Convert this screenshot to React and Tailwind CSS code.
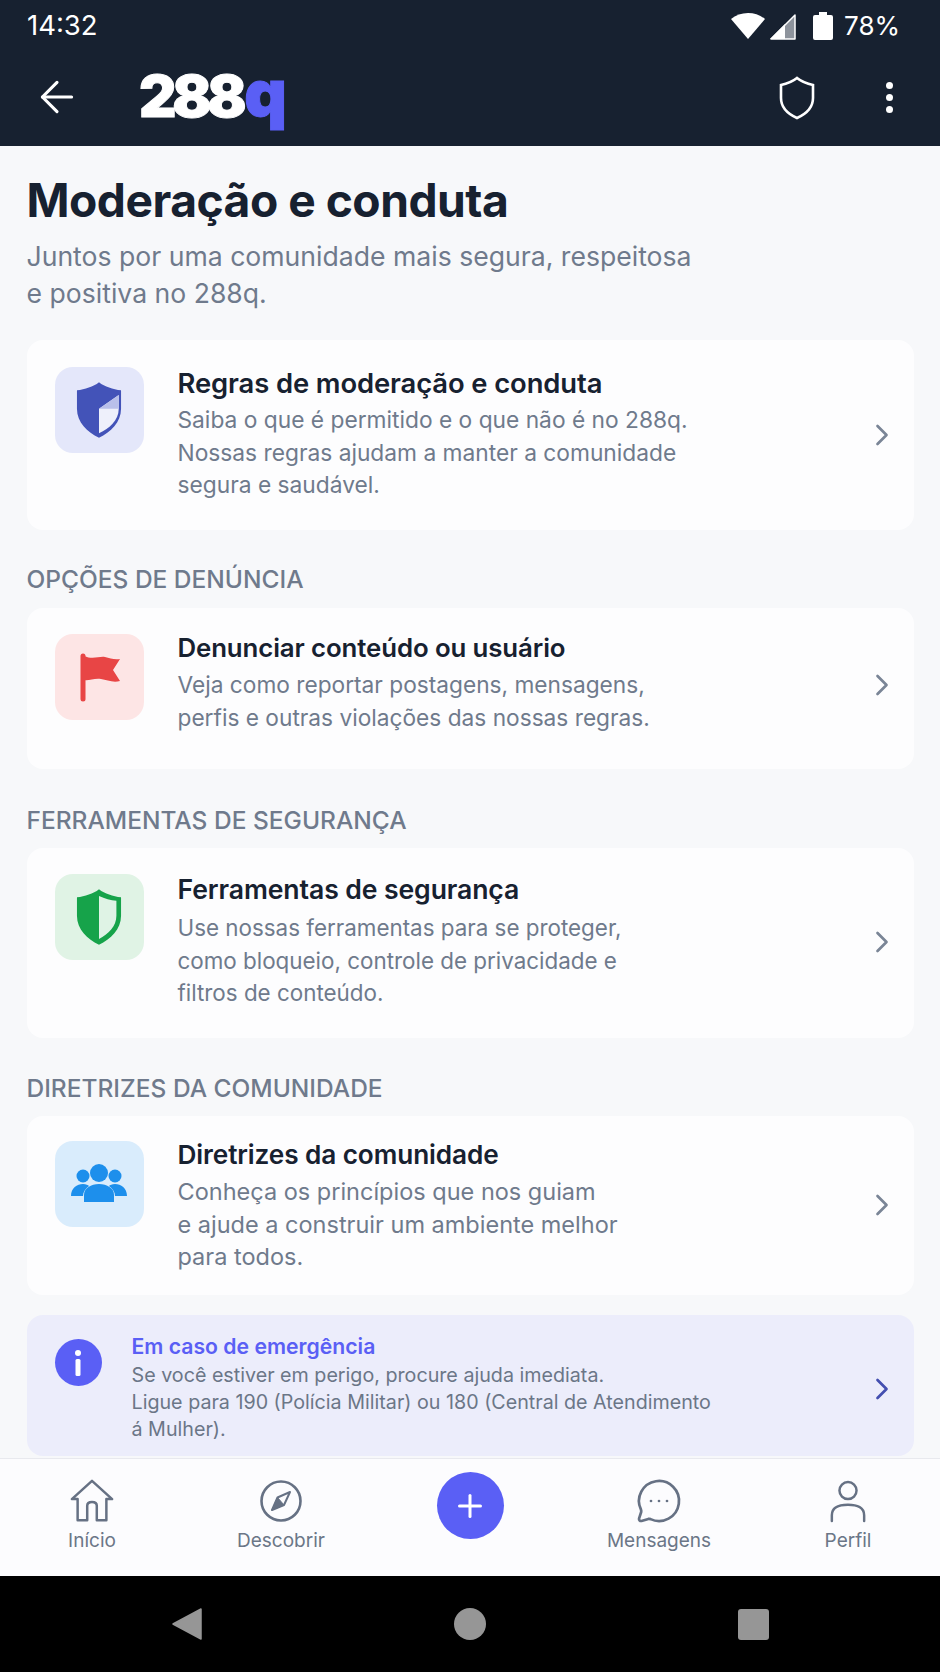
import React from "react";
import { ArrowLeft, ChevronRight, MessageCircleMore, Plus } from "lucide-react";

const sections = [
  {
    id: "rules",
    title: "Regras de moderação e conduta",
    lines: ["Saiba o que é permitido e o que não é no 288q.", "Nossas regras ajudam a manter a comunidade", "segura e saudável."],
    box: "bg-[#e4e7fa]",
    icon: "rules",
    card: "h-[190px] pt-[27px]",
    body: "mt-[1px]",
    titleSize: "text-[27.4px]",
    desc: "mt-[6px] text-[22.75px]",
    chevron: "-mt-[28px]",
  },
  {
    id: "report",
    label: "OPÇÕES DE DENÚNCIA",
    labelGap: "mt-[34px] mb-[14px]",
    title: "Denunciar conteúdo ou usuário",
    lines: ["Veja como reportar postagens, mensagens,", "perfis e outras violações das nossas regras."],
    box: "bg-[#fde5e5]",
    icon: "flag",
    card: "h-[161px] pt-[26px]",
    body: "-mt-[1px]",
    titleSize: "text-[25.8px]",
    desc: "mt-[6px] text-[22.7px]",
    chevron: "-mt-[34px]",
  },
  {
    id: "tools",
    label: "FERRAMENTAS DE SEGURANÇA",
    labelGap: "mt-[36px] mb-[13px]",
    title: "Ferramentas de segurança",
    lines: ["Use nossas ferramentas para se proteger,", "como bloqueio, controle de privacidade e", "filtros de conteúdo."],
    box: "bg-[#e0f3e5]",
    icon: "shield",
    card: "h-[190px] pt-[26px]",
    body: "mt-0",
    titleSize: "text-[26.6px]",
    desc: "mt-[8px] text-[22.4px]",
    chevron: "-mt-[28px]",
  },
  {
    id: "guidelines",
    label: "DIRETRIZES DA COMUNIDADE",
    labelGap: "mt-[35px] mb-[13px]",
    title: "Diretrizes da comunidade",
    lines: ["Conheça os princípios que nos guiam", "e ajude a construir um ambiente melhor", "para todos."],
    box: "bg-[#d9ecfc]",
    icon: "people",
    card: "h-[179px] pt-[25px]",
    body: "-mt-[1px]",
    titleSize: "text-[26.2px]",
    desc: "mt-[6px] text-[23.5px]",
    chevron: "-mt-[26px]",
  },
];

const ShieldPath = "M24 1 C29 5 36 7 43 8 V24 C43 36 34 44 24 49 C14 44 5 36 5 24 V8 C12 7 19 5 24 1 Z";

const CardIcon = ({ type }) => {
  if (type === "rules") {
    return (
      <svg width="56" height="58" viewBox="0 0 48 50">
        <path d={ShieldPath} fill="#4353b8" />
        <path d="M24 24 L41 12 V24 C41 34 33 41 24 45 Z" fill="#eef0fb" />
        <path d="M24 24 L41 12 V24 Z" fill="#b9c0ea" />
      </svg>
    );
  }
  if (type === "shield") {
    return (
      <svg width="56" height="58" viewBox="0 0 48 50">
        <path d={ShieldPath} fill="#16a34a" />
        <path d="M24 7 C29 9 34 11 39 11 V24 C39 33 32 40 24 44 Z" fill="#dff3e5" />
      </svg>
    );
  }
  if (type === "flag") {
    return (
      <svg width="44" height="50" viewBox="0 0 44 50" className="ml-[3px] mt-[2px]">
        <path d="M4 3 V46" stroke="#e84545" strokeWidth="5" strokeLinecap="round" />
        <path d="M5 3 C14 7 20 3 26 4 C31 5 35 7 41 6 L34 17 L41 28 C34 30 28 27 22 26 C15 25 10 28 5 27 Z" fill="#e84545" />
      </svg>
    );
  }
  return (
    <svg width="56" height="40" viewBox="0 0 56 40">
      <circle cx="12" cy="12" r="6.5" fill="#1d8fec" />
      <circle cx="44" cy="12" r="6.5" fill="#1d8fec" />
      <path d="M0 32 C0 24 6 20 12 20 C15 20 17 21 18 22 C14 25 12 28 12 32 Z" fill="#1d8fec" />
      <path d="M56 32 C56 24 50 20 44 20 C41 20 39 21 38 22 C42 25 44 28 44 32 Z" fill="#1d8fec" />
      <circle cx="28" cy="9" r="9" fill="#1d8fec" />
      <path d="M13 38 V31 C13 24 20 20 28 20 C36 20 43 24 43 31 V38 Z" fill="#1d8fec" />
    </svg>
  );
};

const Card = ({ section }) => (
  <div className={`flex ${section.card} rounded-2xl bg-[#fdfdfe] pl-[28px] pr-[14px]`}>
    <div className={`flex h-[86px] w-[89px] shrink-0 items-center justify-center rounded-[18px] ${section.box}`}>
      <CardIcon type={section.icon} />
    </div>
    <div className={`ml-[34px] flex-1 ${section.body}`}>
      <h2 className={`${section.titleSize} leading-[30px] font-semibold tracking-[-0.1px] text-[#172130]`}>{section.title}</h2>
      <div className={`${section.desc} leading-[32.5px] text-[#6f7a8c]`}>
        {section.lines.map((line) => (
          <p key={line}>{line}</p>
        ))}
      </div>
    </div>
    <ChevronRight className={`${section.chevron} shrink-0 self-center text-[#7a8596]`} size={36} strokeWidth={1.8} />
  </div>
);

const HomeIcon = () => (
  <svg width="46" height="46" viewBox="0 0 48 46" fill="none" stroke="#667184" strokeWidth="2.6" strokeLinejoin="round" strokeLinecap="round">
    <path d="M3 21 L24 2 L45 21 H39 V43 H29 V28 C29 25 27 24 24 24 C21 24 19 25 19 28 V43 H9 V21 Z" />
  </svg>
);

const CompassIcon = () => (
  <svg width="44" height="44" viewBox="0 0 44 44" fill="none" stroke="#667184" strokeWidth="2.6" strokeLinejoin="round">
    <circle cx="22" cy="22" r="19.5" />
    <path d="M31 13 L25 26 L13 31 L18.5 18.5 Z" strokeWidth="2" />
    <path d="M25 26 L13 31 L18.5 18.5 Z" fill="#667184" strokeWidth="1" />
  </svg>
);

const ProfileIcon = () => (
  <svg width="38" height="46" viewBox="0 0 40 46" fill="none" stroke="#667184" strokeWidth="2.6" strokeLinecap="round">
    <circle cx="20" cy="12" r="9" />
    <path d="M3 44 V38 C3 30 10 27 20 27 C30 27 37 30 37 38 V44" />
  </svg>
);

const MessageIcon = () => <MessageCircleMore size={48} strokeWidth={1.35} className="text-[#667184]" />;

const NavItem = ({ icon: Icon, label }) => (
  <div className="flex w-[130px] flex-col items-center">
    <div className="flex h-[46px] items-center justify-center">
      <Icon />
    </div>
    <span className="mt-[5px] text-[19px] leading-[24px] text-[#6b7687]">{label}</span>
  </div>
);

export default function App() {
  return (
    <div className="flex h-[1672px] w-[940px] flex-col overflow-hidden bg-[#f7f8fa] font-['Inter',sans-serif]">
      <header className="h-[146px] shrink-0 bg-[#172130] text-white">
        <div className="flex h-[52px] items-center justify-between pl-[27px] pr-[40px]">
          <span className="text-[27.5px] leading-none font-normal">14:32</span>
          <div className="flex items-center">
            <svg width="34" height="28" viewBox="0 0 34 28">
              <path d="M0 7 C9 -1 25 -1 34 7 L17 27 Z" fill="white" />
            </svg>
            <svg width="28" height="28" viewBox="0 0 28 28" className="ml-[4px]">
              <path d="M26 3 V27 H2 Z" fill="#8d939c" stroke="white" strokeWidth="1.5" strokeLinejoin="round" />
              <path d="M16 12 V27 H1 Z" fill="white" />
            </svg>
            <svg width="20" height="28" viewBox="0 0 20 28" className="ml-[16px]">
              <path d="M6 0 H14 V3 H18 Q20 3 20 5 V26 Q20 28 18 28 H2 Q0 28 0 26 V5 Q0 3 2 3 H6 Z" fill="white" />
            </svg>
            <span className="ml-[11px] text-[26px] leading-none">78%</span>
          </div>
        </div>
        <div className="flex h-[94px] items-center pl-[32px] pr-[47px]">
          <ArrowLeft size={50} strokeWidth={1.5} className="-mt-[4px]" />
          <div className="ml-[57px] -mt-[12px] flex items-baseline text-[58px] leading-none font-black tracking-[-4.3px] [-webkit-text-stroke:1px_white]">
            288
            <span className="ml-[2px] text-[66px] tracking-normal text-[#5a5ff5] [-webkit-text-stroke:1px_#5a5ff5]">q</span>
          </div>
          <svg width="38" height="44" viewBox="0 0 38 44" className="ml-auto -mt-[2px]">
            <path d="M19 2 C24 6 30 8 35 9 V22 C35 31 28 38 19 42 C10 38 3 31 3 22 V9 C8 8 14 6 19 2 Z" fill="none" stroke="white" strokeWidth="2.6" />
          </svg>
          <div className="ml-[70px] -mt-[4px] flex flex-col gap-[5px]">
            <span className="h-[7px] w-[7px] rounded-full bg-white" />
            <span className="h-[7px] w-[7px] rounded-full bg-white" />
            <span className="h-[7px] w-[7px] rounded-full bg-white" />
          </div>
        </div>
      </header>

      <main className="flex-1 overflow-hidden px-[26.5px] pt-[27px]">
        <h1 className="text-[46.2px] leading-[54px] font-bold tracking-[-0.5px] text-[#172130]">Moderação e conduta</h1>
        <p className="mt-[11px] text-[26.6px] leading-[37px] text-[#6f7a8c]">
          Juntos por uma comunidade mais segura, respeitosa
          <br />e positiva no 288q.
        </p>

        <div className="mt-[28px]">
          {sections.map((section) => (
            <section key={section.id}>
              {section.label && (
                <h3 className={`${section.labelGap} text-[24.5px] leading-[30px] font-medium text-[#6f7a8c]`}>{section.label}</h3>
              )}
              <Card section={section} />
            </section>
          ))}
        </div>

        <div className="mt-[20px] flex h-[141px] rounded-2xl bg-[#ecedfb] pl-[28px] pr-[14px] pt-[24px]">
          <div className="flex h-[47px] w-[47px] shrink-0 items-center justify-center rounded-full bg-[#5a5ff5]">
            <svg width="8" height="26" viewBox="0 0 8 26">
              <circle cx="4" cy="3" r="3" fill="white" />
              <rect x="1.5" y="9" width="5" height="17" rx="1.5" fill="white" />
            </svg>
          </div>
          <div className="ml-[30px] -mt-[7px] flex-1">
            <h2 className="text-[21.2px] leading-[28px] font-semibold text-[#5a5ff5]">Em caso de emergência</h2>
            <div className="mt-[2px] text-[19.7px] leading-[27px] text-[#6b7687]">
              <p>Se você estiver em perigo, procure ajuda imediata.</p>
              <p>Ligue para 190 (Polícia Militar) ou 180 (Central de Atendimento</p>
              <p>á Mulher).</p>
            </div>
          </div>
          <ChevronRight className="-mt-[18px] shrink-0 self-center text-[#444fb0]" size={36} strokeWidth={1.8} />
        </div>
      </main>

      <nav className="flex h-[118px] shrink-0 items-start justify-between border-t border-[#e8e9ee] bg-[#fcfcfe] px-[27px] pt-[19px]">
        <NavItem icon={HomeIcon} label="Início" />
        <NavItem icon={CompassIcon} label="Descobrir" />
        <div className="-mt-[6px] flex w-[130px] justify-center">
          <div className="flex h-[67px] w-[67px] items-center justify-center rounded-full bg-[#5a5ff5]">
            <Plus size={36} strokeWidth={2} className="text-white" />
          </div>
        </div>
        <NavItem icon={MessageIcon} label="Mensagens" />
        <NavItem icon={ProfileIcon} label="Perfil" />
      </nav>

      <div className="flex h-[96px] shrink-0 items-center justify-center gap-[252px] bg-black">
        <svg width="30" height="32" viewBox="0 0 30 32">
          <path d="M29 1 V31 L1 16 Z" fill="#969696" stroke="#969696" strokeWidth="1.5" strokeLinejoin="round" />
        </svg>
        <span className="h-[32px] w-[32px] rounded-full bg-[#969696]" />
        <span className="h-[31px] w-[31px] rounded-[3px] bg-[#969696]" />
      </div>
    </div>
  );
}
